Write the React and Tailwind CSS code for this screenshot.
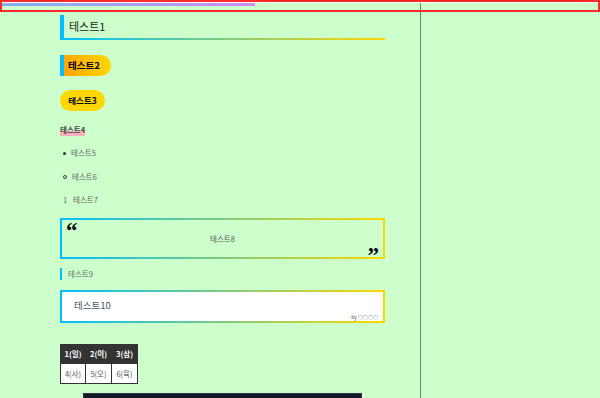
export default function App() {
  const font = "font-['Noto_Sans_CJK_KR','Noto_Sans',sans-serif]";
  return (
    <div className={`relative flex min-h-[398px] bg-[#ccffcc] ${font}`}>
      {/* top progress overlay */}
      <div className="absolute left-0 top-0 h-[12px] w-full border-2 border-[#ff2b2b]">
        <div className="h-px w-full bg-white/90" />
        <div className="h-[3px] w-[253px] bg-[linear-gradient(to_right,#7fb2f0,#cf8cf2)]" />
      </div>

      <main className="w-[421px] shrink-0 border-r border-[#5f8f5f] pl-[60px] pr-[35px] pt-[15px] pb-[20px]">
        <h1 className="flex h-[25px] flex-col border-l-4 border-[#00bfff] font-normal">
          <div className="flex flex-1 items-center pl-[5px] text-[11px] text-[#222]">테스트1</div>
          <div className="h-[2px] w-full bg-[linear-gradient(to_right,#00bfff,#ffd700)]" />
        </h1>

        <h2 className="mt-[15px] flex h-[21px] w-[51px] items-center rounded-r-full border-l-4 border-[#00bfff] bg-[linear-gradient(to_right,#ffa500,#ffd700)] pl-[4px] text-[9.5px] font-bold text-black">
          테스트2
        </h2>

        <h3 className="mt-[14px] flex h-[21px] w-[45px] items-center justify-center rounded-full bg-[#ffd700] text-[8.5px] font-bold text-black">
          테스트3
        </h3>

        <div className="mt-[11px] flex h-[16px] items-center text-[7.5px] font-bold text-[#444]">
          <span className="bg-[linear-gradient(transparent_58%,#ffb0c0_58%)]">테스트4</span>
        </div>

        <ul className="text-[7.5px] text-[#666]">
          <li className="mt-[7px] flex h-[16px] items-center pl-[3px]">
            <span className="mr-[5px] h-[3px] w-[3px] rounded-full bg-[#333]" />테스트5
          </li>
          <li className="mt-[8px] flex h-[16px] items-center pl-[3px]">
            <span className="mr-[5px] h-[4px] w-[4px] rounded-full border border-[#444]" />테스트6
          </li>
        </ul>
        <ol className="text-[7.5px] text-[#666]">
          <li className="mt-[7px] flex h-[16px] items-center pl-[3px]">
            <span className="w-[10px]">1</span>테스트7
          </li>
        </ol>

        <blockquote className="mt-[10px] h-[41px] bg-[linear-gradient(to_right,#00bfff,#ffd700)] p-[2px]">
          <div className="flex h-full flex-col bg-[#ccffcc] px-[4px]">
            <div className="h-[12px] font-['Liberation_Serif',serif] text-[23px] font-bold leading-[22px] text-black">“</div>
            <div className="flex h-[13px] items-center justify-center text-[7.5px] text-[#555]">테스트8</div>
            <div className="h-[12px] text-right font-['Liberation_Serif',serif] text-[23px] font-bold leading-[21px] text-black">”</div>
          </div>
        </blockquote>

        <div className="mt-[9px] flex h-[12px] items-center border-l-2 border-[#00bfff] pl-[6px] text-[7.5px] text-[#666]">
          테스트9
        </div>

        <div className="mt-[10px] h-[33px] bg-[linear-gradient(to_right,#00bfff,#ffd700)] p-[2px]">
          <div className="flex h-full flex-col bg-white pl-[12px] pr-[5px]">
            <div className="flex h-[20px] items-end text-[9.5px] text-[#445566]">테스트10</div>
            <div className="flex h-[9px] items-center justify-end text-[5px] text-[#555]">by ○○○○</div>
          </div>
        </div>

        <table className="mt-[21px] border-collapse text-[7.5px]">
          <thead>
            <tr className="h-[19px] bg-[#333] text-white">
              <th className="w-[25px] border border-[#333] font-bold">1(일)</th>
              <th className="w-[26px] border border-[#333] font-bold">2(이)</th>
              <th className="w-[26px] border border-[#333] font-bold">3(삼)</th>
            </tr>
          </thead>
          <tbody>
            <tr className="h-[20px] bg-white text-[#555]">
              <td className="border border-[#333] text-center">4(사)</td>
              <td className="border border-[#333] text-center">5(오)</td>
              <td className="border border-[#333] text-center">6(육)</td>
            </tr>
          </tbody>
        </table>

        <pre className="mx-[23px] mt-[9px] h-[40px] border border-[#334] bg-[#111827]" />
      </main>

      <aside className="flex-1" />
    </div>
  );
}
